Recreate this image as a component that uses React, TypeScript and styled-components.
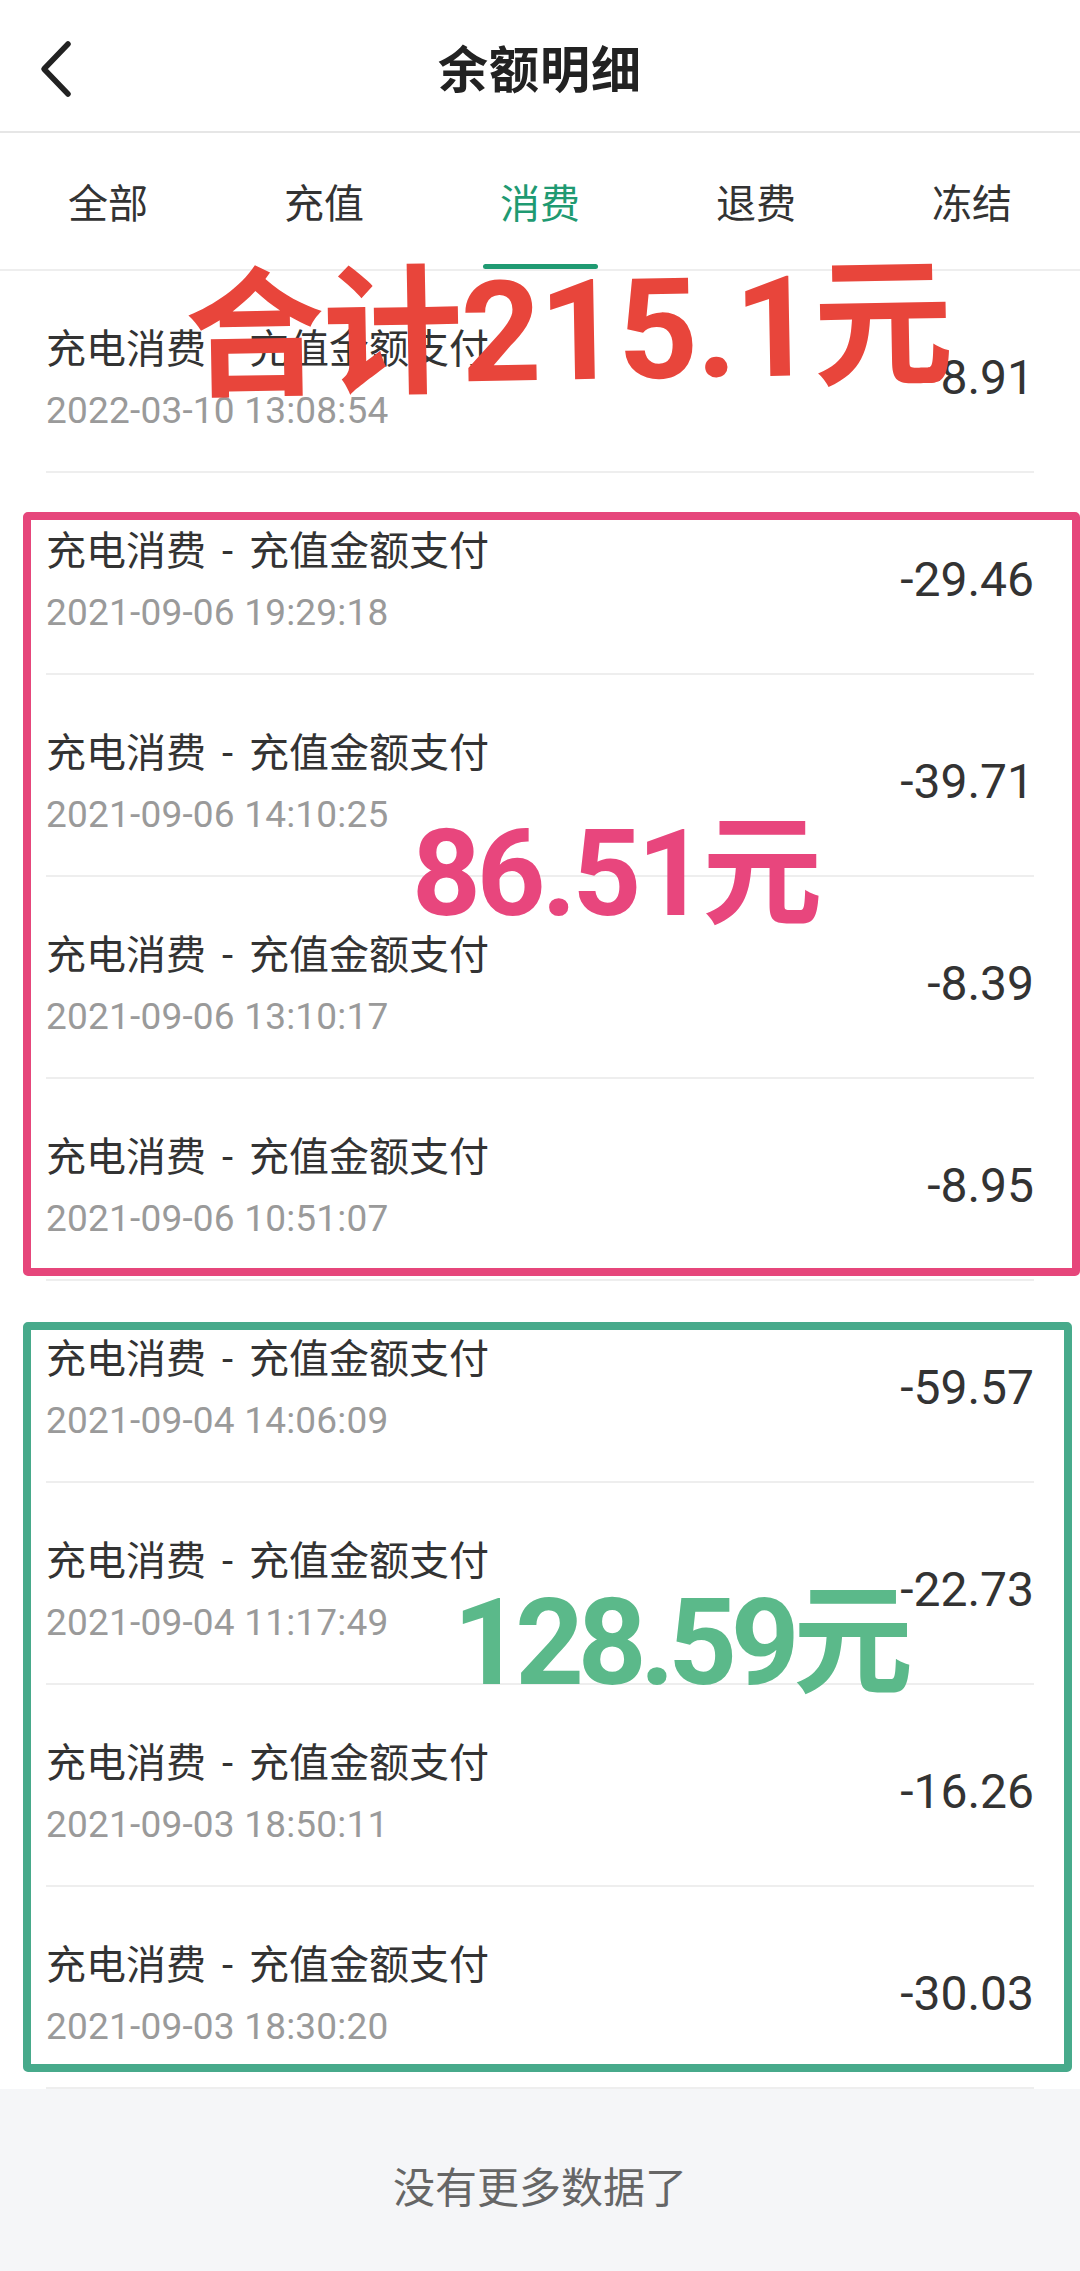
import React from 'react';
import styled, {createGlobalStyle} from 'styled-components';

const GlobalStyle = createGlobalStyle`
  html, body {
    margin: 0;
    padding: 0;
    background: #ffffff;
  }

  body {
    font-family: Roboto, "Noto Sans CJK SC", sans-serif;
    color: #333333;
  }
`

const Page = styled.div`
  position: relative;
  width: 1080px;
  height: 2271px;
  overflow: hidden;
  background: #ffffff;
  display: flex;
  flex-direction: column;
`

const Header = styled.header`
  display: grid;
  grid-template-columns: 140px 1fr 140px;
  align-items: center;
  height: 131px;
  border-bottom: 2px solid #e6e6e6;
`

const BackButton = styled.div`
  display: flex;
  align-items: center;
  padding-left: 36px;
  padding-top: 4px;

  svg {
    width: 40px;
    height: 64px;
  }
`

const Title = styled.h1`
  margin: 0;
  text-align: center;
  font-size: 50px;
  font-weight: 700;
  color: #222222;
  letter-spacing: 1px;
`

const TabBar = styled.nav`
  display: grid;
  grid-template-columns: repeat(5, 1fr);
  height: 136px;
  border-bottom: 2px solid #eeeeee;
`

const Tab = styled.div<{ $active?: boolean }>`
  position: relative;
  display: flex;
  align-items: center;
  justify-content: center;
  font-size: 40px;
  color: ${props => props.$active ? '#1f9a72' : '#333333'};

  &::after {
    content: '';
    display: ${props => props.$active ? 'block' : 'none'};
    position: absolute;
    bottom: 0;
    left: 50%;
    width: 115px;
    height: 5px;
    margin-left: -57px;
    border-radius: 3px;
    background: #1f9a72;
  }
`

const List = styled.div`
  display: flex;
  flex-direction: column;
`

const Row = styled.div`
  display: flex;
  align-items: center;
  justify-content: space-between;
  height: 202px;
  padding-top: 12px;
  box-sizing: border-box;
  margin: 0 46px;
  border-bottom: 2px solid #eeeeee;
`

const RowText = styled.div`
  display: flex;
  flex-direction: column;
  gap: 5px;
  margin-top: 6px;
`

const RowTitle = styled.span`
  font-size: 40px;
  line-height: 56px;
  word-spacing: 6px;
  color: #333333;
`

const RowDate = styled.span`
  font-size: 37px;
  line-height: 56px;
  letter-spacing: 0.2px;
  color: #9a9a9a;
`

const Amount = styled.span`
  font-size: 48px;
  color: #333333;
`

const Footer = styled.footer`
  flex: 1;
  display: flex;
  align-items: center;
  justify-content: center;
  padding-top: 8px;
  background: #f5f6f8;
  font-size: 42px;
  color: #666666;
`

const Frame = styled.div<{ $color: string; $left: number; $top: number; $width: number; $height: number }>`
  position: absolute;
  left: ${props => props.$left}px;
  top: ${props => props.$top}px;
  width: ${props => props.$width}px;
  height: ${props => props.$height}px;
  box-sizing: border-box;
  border: 8px solid ${props => props.$color};
  border-radius: 5px;
  pointer-events: none;
`

const Note = styled.div<{ $color: string; $left: number; $top: number; $size: number; $spacing: number; $tilt?: number }>`
  position: absolute;
  left: ${props => props.$left}px;
  top: ${props => props.$top}px;
  font-size: ${props => props.$size}px;
  line-height: 1;
  font-weight: 700;
  white-space: nowrap;
  letter-spacing: ${props => props.$spacing}px;
  color: ${props => props.$color};
  transform: rotate(${props => props.$tilt || 0}deg);
  transform-origin: left center;
  pointer-events: none;
`

const records = [
    {date: '2022-03-10 13:08:54', amount: '-8.91'},
    {date: '2021-09-06 19:29:18', amount: '-29.46'},
    {date: '2021-09-06 14:10:25', amount: '-39.71'},
    {date: '2021-09-06 13:10:17', amount: '-8.39'},
    {date: '2021-09-06 10:51:07', amount: '-8.95'},
    {date: '2021-09-04 14:06:09', amount: '-59.57'},
    {date: '2021-09-04 11:17:49', amount: '-22.73'},
    {date: '2021-09-03 18:50:11', amount: '-16.26'},
    {date: '2021-09-03 18:30:20', amount: '-30.03'},
];

const tabs = ['全部', '充值', '消费', '退费', '冻结'];

const App = () => {
    return (
        <Page>
            <GlobalStyle/>
            <Header>
                <BackButton>
                    <svg viewBox="0 0 40 64" fill="none" stroke="#222222" strokeWidth={5.5}
                         strokeLinecap="round" strokeLinejoin="round">
                        <path d="M32 8 L8 33 L32 58"/>
                    </svg>
                </BackButton>
                <Title>余额明细</Title>
                <div/>
            </Header>
            <TabBar>
                {tabs.map(tab => (
                    <Tab key={tab} $active={tab === '消费'}>{tab}</Tab>
                ))}
            </TabBar>
            <List>
                {records.map(record => (
                    <Row key={record.date}>
                        <RowText>
                            <RowTitle>充电消费 - 充值金额支付</RowTitle>
                            <RowDate>{record.date}</RowDate>
                        </RowText>
                        <Amount>{record.amount}</Amount>
                    </Row>
                ))}
            </List>
            <Footer>没有更多数据了</Footer>

            <Frame $color="#e6467b" $left={23} $top={512} $width={1057} $height={764}/>
            <Frame $color="#47aa8b" $left={23} $top={1322} $width={1049} $height={750}/>
            <Note $color="#e8453b" $left={185} $top={268} $size={140} $spacing={-2} $tilt={-1}>合计215.1元</Note>
            <Note $color="#e8467d" $left={412} $top={814} $size={120} $spacing={-4}>86.51元</Note>
            <Note $color="#5bb98a" $left={453} $top={1583} $size={120} $spacing={-6.5}>128.59元</Note>
        </Page>
    )
}

export default App;
